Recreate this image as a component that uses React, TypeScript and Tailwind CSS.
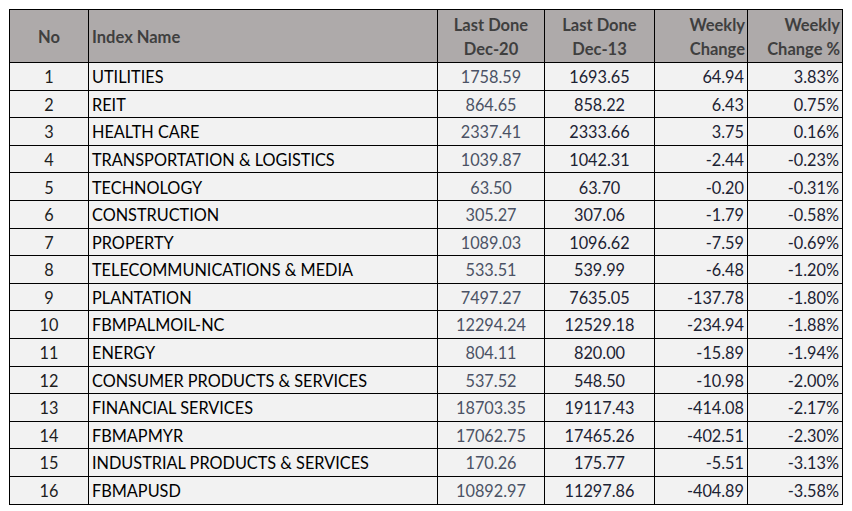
const rows: [number, string, string, string, string, string][] = [
  [1, "UTILITIES", "1758.59", "1693.65", "64.94", "3.83%"],
  [2, "REIT", "864.65", "858.22", "6.43", "0.75%"],
  [3, "HEALTH CARE", "2337.41", "2333.66", "3.75", "0.16%"],
  [4, "TRANSPORTATION & LOGISTICS", "1039.87", "1042.31", "-2.44", "-0.23%"],
  [5, "TECHNOLOGY", "63.50", "63.70", "-0.20", "-0.31%"],
  [6, "CONSTRUCTION", "305.27", "307.06", "-1.79", "-0.58%"],
  [7, "PROPERTY", "1089.03", "1096.62", "-7.59", "-0.69%"],
  [8, "TELECOMMUNICATIONS & MEDIA", "533.51", "539.99", "-6.48", "-1.20%"],
  [9, "PLANTATION", "7497.27", "7635.05", "-137.78", "-1.80%"],
  [10, "FBMPALMOIL-NC", "12294.24", "12529.18", "-234.94", "-1.88%"],
  [11, "ENERGY", "804.11", "820.00", "-15.89", "-1.94%"],
  [12, "CONSUMER PRODUCTS & SERVICES", "537.52", "548.50", "-10.98", "-2.00%"],
  [13, "FINANCIAL SERVICES", "18703.35", "19117.43", "-414.08", "-2.17%"],
  [14, "FBMAPMYR", "17062.75", "17465.26", "-402.51", "-2.30%"],
  [15, "INDUSTRIAL PRODUCTS & SERVICES", "170.26", "175.77", "-5.51", "-3.13%"],
  [16, "FBMAPUSD", "10892.97", "11297.86", "-404.89", "-3.58%"],
]

export default function App() {
  return (
    <div className="h-[511px] w-[852px] bg-white pl-[9px] pt-[9px] font-['Lato',sans-serif] text-[16.3px]">
      <table className="table-fixed border-collapse">
        <colgroup>
          <col className="w-[79px]" />
          <col className="w-[349px]" />
          <col className="w-[107px]" />
          <col className="w-[110px]" />
          <col className="w-[93px]" />
          <col className="w-[95px]" />
        </colgroup>
        <thead>
          <tr className="h-[53px] bg-[#aeaaaa] text-[16.5px] font-bold leading-[24px] text-[#3f3f3f]">
            <th className="border border-black pt-[2px] text-center">No</th>
            <th className="border border-black px-[3px] pt-[2px] text-left">Index Name</th>
            <th className="border border-black pt-[2px] text-center">
              Last Done
              <br />
              Dec-20
            </th>
            <th className="border border-black pt-[2px] text-center">
              Last Done
              <br />
              Dec-13
            </th>
            <th className="border border-black px-[2px] pt-[2px] text-right">
              Weekly
              <br />
              Change
            </th>
            <th className="border border-black px-[2px] pt-[2px] text-right">
              Weekly
              <br />
              Change %
            </th>
          </tr>
        </thead>
        <tbody>
          {rows.map(([no, name, d20, d13, chg, pct]) => (
            <tr key={no} className="h-[27.6px] bg-[#f2f2f2] leading-none">
              <td className="border border-black pt-[2px] text-center text-[#1e1e1e]">{no}</td>
              <td className="border border-black px-[3px] pt-[2px] text-black">{name}</td>
              <td className="border border-black pt-[2px] text-center text-[#4b5265]">{d20}</td>
              <td className="border border-black pt-[2px] text-center text-[#1c2233]">{d13}</td>
              <td className="border border-black px-[3px] pt-[2px] text-right text-[#1c2233]">{chg}</td>
              <td className="border border-black px-[3px] pt-[2px] text-right text-[#1c2233]">{pct}</td>
            </tr>
          ))}
        </tbody>
      </table>
    </div>
  )
}
